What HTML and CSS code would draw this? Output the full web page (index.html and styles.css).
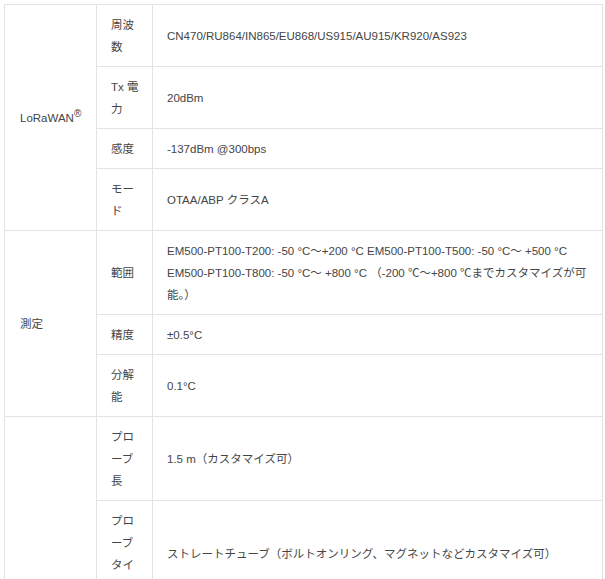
FILE: index.html
```html
<!DOCTYPE html>
<html lang="ja">
<head>
<meta charset="utf-8">
<title>EM500-PT100 仕様</title>
<link rel="stylesheet" href="styles.css">
</head>
<body>
<table class="spec">
  <colgroup>
    <col class="c1">
    <col class="c2">
    <col class="c3">
  </colgroup>
  <tbody>
    <tr>
      <td class="group" rowspan="4">LoRaWAN<sup class="reg">®</sup></td>
      <td class="key">周波数</td>
      <td class="val">CN470/RU864/IN865/EU868/US915/AU915/KR920/AS923</td>
    </tr>
    <tr>
      <td class="key">Tx 電力</td>
      <td class="val">20dBm</td>
    </tr>
    <tr>
      <td class="key">感度</td>
      <td class="val">-137dBm @300bps</td>
    </tr>
    <tr>
      <td class="key">モード</td>
      <td class="val">OTAA/ABP クラスA</td>
    </tr>
    <tr>
      <td class="group" rowspan="3">測定</td>
      <td class="key">範囲</td>
      <td class="val">EM500-PT100-T200: -50 °C～+200 °C EM500-PT100-T500: -50 °C～ +500 °C EM500-PT100-T800: -50 °C～ +800 °C （-200 ℃～+800 ℃までカスタマイズが可能。）</td>
    </tr>
    <tr>
      <td class="key">精度</td>
      <td class="val">±0.5°C</td>
    </tr>
    <tr>
      <td class="key">分解能</td>
      <td class="val">0.1°C</td>
    </tr>
    <tr>
      <td class="group" rowspan="2"></td>
      <td class="key">プローブ長</td>
      <td class="val">1.5 m（カスタマイズ可）</td>
    </tr>
    <tr>
      <td class="key">プローブタイプ</td>
      <td class="val">ストレートチューブ（ボルトオンリング、マグネットなどカスタマイズ可）</td>
    </tr>
  </tbody>
</table>
</body>
</html>
```

FILE: styles.css
```css
html, body {
  background: #ffffff;
}
body {
  margin: 4px 0 0 4px;
  font-family: "Liberation Sans", "Noto Sans CJK JP", sans-serif;
  font-size: 11.5px;
  line-height: 22px;
  color: #454545;
}
.spec {
  border-collapse: collapse;
  table-layout: fixed;
  width: 598px;
}
.c1 { width: 92px; }
.c2 { width: 56px; }
.c3 { width: 450px; }
.spec td {
  border: 1px solid #e3e3e3;
  vertical-align: middle;
  text-align: left;
  padding: 9px 11px 8px 14px;
}
.spec td.group {
  padding-left: 15px;
}
.spec td.val {
  padding-right: 14px;
}
.reg {
  font-size: 10px;
  line-height: 0;
  vertical-align: 5px;
}
```
